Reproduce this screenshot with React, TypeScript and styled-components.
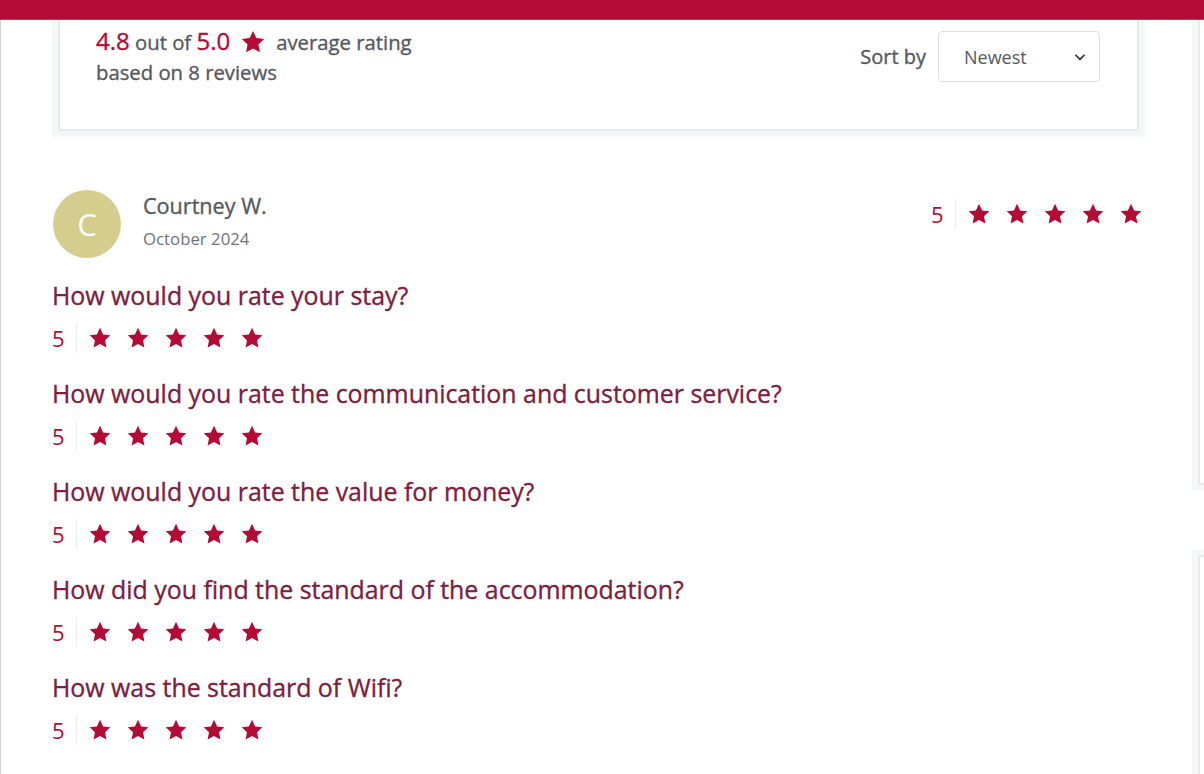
import React from 'react';
import styled, { createGlobalStyle, css } from 'styled-components';

const RED = '#b30b35';
const MAROON = '#7d2040';
const GREY = '#55595e';

// Open Sans ships here in regular and semibold only; a thin stroke gives the medium look
const medium = css`
  font-weight: 400;
  -webkit-text-stroke: 0.35px currentColor;
`;

const GlobalStyle = createGlobalStyle`
  html, body {
    margin: 0;
    padding: 0;
    background: #fff;
    font-family: "Open Sans", "Noto Sans", Arial, sans-serif;
    overflow: hidden;
  }
`;

const TopBar = styled.div`
  position: relative;
  z-index: 2;
  height: 20px;
  background: ${RED};
  border-bottom: 1px solid #c9385a;
  box-sizing: border-box;
`;

const Page = styled.div`
  display: flex;
  align-items: flex-start;
  border-left: 1px solid #d0d0d0;
  min-height: 754px;
  box-sizing: border-box;
`;

const Main = styled.main`
  width: 1093px;
  margin-left: 51px;
  flex-shrink: 0;
`;

const Sidebar = styled.aside`
  display: flex;
  flex-direction: column;
  gap: 70px;
  margin-left: 53px;
  flex-shrink: 0;
`;

const SideCard = styled.div<{ $height: number }>`
  width: 300px;
  height: ${({ $height }) => $height}px;
  border: 2px solid #e6e9ee;
  border-top: none;
  box-shadow: 0 0 0 6px #f6f7f9;
  background: #fff;
  box-sizing: border-box;

  & + & {
    border-top: 2px solid #e6e9ee;
  }
`;

const SummaryCard = styled.section`
  margin: 0 6px;
  height: 111px;
  border: 2px solid #e6e9ee;
  border-top: none;
  box-shadow: 0 0 0 6px #f6f7f9;
  display: flex;
  justify-content: space-between;
  padding: 6px 37px 0 36px;
  box-sizing: border-box;
`;

const Average = styled.div`
  color: ${GREY};
  font-size: 20.3px;
  ${medium};
  line-height: 30px;
`;

const AverageLine = styled.div`
  display: flex;
  align-items: center;
  gap: 10px;
`;

const Big = styled.span`
  color: ${RED};
  font-size: 24px;
`;

const SortBox = styled.div`
  display: flex;
  align-items: center;
  gap: 12px;
  padding-top: 5px;
  align-self: flex-start;
`;

const SortLabel = styled.label`
  color: ${GREY};
  font-size: 20px;
  ${medium};
`;

const Select = styled.div`
  width: 162px;
  height: 51px;
  border: 1px solid #dadde1;
  border-radius: 4px;
  display: flex;
  align-items: center;
  justify-content: space-between;
  padding: 0 12px 0 25px;
  box-sizing: border-box;
  color: ${GREY};
  font-size: 18px;
`;

const Review = styled.article`
  padding-top: 59px;
`;

const ReviewHead = styled.div`
  display: flex;
  align-items: flex-start;
  justify-content: space-between;
`;

const Person = styled.div`
  display: flex;
  align-items: center;
  gap: 22px;
  margin-left: 1px;
`;

const Avatar = styled.div`
  width: 68px;
  height: 68px;
  border-radius: 50%;
  background: #d4cd8d;
  color: #fff;
  font-size: 31px;
  display: flex;
  align-items: center;
  justify-content: center;
`;

const Name = styled.div`
  color: ${GREY};
  font-size: 21.6px;
  ${medium};
  line-height: 28px;
  margin-top: -6px;
`;

const DateText = styled.div`
  color: #6f7479;
  font-size: 16.8px;
  line-height: 22px;
  margin-top: 8px;
`;

const Question = styled.h3`
  margin: 0;
  color: ${MAROON};
  font-size: 24.9px;
  ${medium};
  line-height: 30px;
`;

const Block = styled.div<{ $first?: boolean }>`
  margin-top: ${({ $first }) => ($first ? '22px' : '24px')};
`;

const RatingRow = styled.div`
  display: flex;
  align-items: center;
  height: 32px;
  margin-top: 12px;
`;

const HeadRating = styled(RatingRow)`
  margin-top: 8px;
  margin-right: 2px;
`;

const Score = styled.span`
  color: ${RED};
  font-size: 22px;
  width: 24px;
  line-height: 32px;
`;

const Divider = styled.span`
  width: 1px;
  height: 30px;
  background: #ececec;
  margin-right: 11px;
`;

const Stars = styled.div`
  display: flex;
  gap: 14px;
`;

const StarSvg = styled.svg<{ $size: number }>`
  width: ${({ $size }) => $size}px;
  height: ${({ $size }) => $size}px;
  fill: ${RED};
  display: block;
`;

const Star = ({ size = 24 }: { size?: number }) => (
  <StarSvg $size={size} viewBox="0 0 24 24">
    <path d="M12 1.8l3.1 6.6 7.2.9-5.3 5 1.4 7.2L12 18l-6.4 3.5 1.4-7.2-5.3-5 7.2-.9z" />
  </StarSvg>
);

const Rating = ({ value, as: Row = RatingRow }: { value: number; as?: typeof RatingRow }) => (
  <Row>
    <Score>{value}</Score>
    <Divider />
    <Stars>
      {Array.from({ length: 5 }).map((_, i) => (
        <Star key={i} />
      ))}
    </Stars>
  </Row>
);

const questions = [
  'How would you rate your stay?',
  'How would you rate the communication and customer service?',
  'How would you rate the value for money?',
  'How did you find the standard of the accommodation?',
  'How was the standard of Wifi?',
];

export default function App() {
  return (
    <>
      <GlobalStyle />
      <TopBar />
      <Page>
        <Main>
          <SummaryCard>
            <Average>
              <AverageLine>
                <span>
                  <Big>4.8</Big> out of <Big>5.0</Big>
                </span>
                <Star size={26} />
                <span>average rating</span>
              </AverageLine>
              <div>based on 8 reviews</div>
            </Average>
            <SortBox>
              <SortLabel>Sort by</SortLabel>
              <Select>
                <span>Newest</span>
                <svg width="14" height="14" viewBox="0 0 24 24" fill="none" stroke="#333" strokeWidth="3" strokeLinecap="round" strokeLinejoin="round">
                  <path d="M5 9l7 7 7-7" />
                </svg>
              </Select>
            </SortBox>
          </SummaryCard>

          <Review>
            <ReviewHead>
              <Person>
                <Avatar>C</Avatar>
                <div>
                  <Name>Courtney W.</Name>
                  <DateText>October 2024</DateText>
                </div>
              </Person>
              <Rating value={5} as={HeadRating} />
            </ReviewHead>
            {questions.map((q, i) => (
              <Block key={q} $first={i === 0}>
                <Question>{q}</Question>
                <Rating value={5} />
              </Block>
            ))}
          </Review>
        </Main>
        <Sidebar>
          <SideCard $height={465} />
          <SideCard $height={300} />
        </Sidebar>
      </Page>
    </>
  );
}
